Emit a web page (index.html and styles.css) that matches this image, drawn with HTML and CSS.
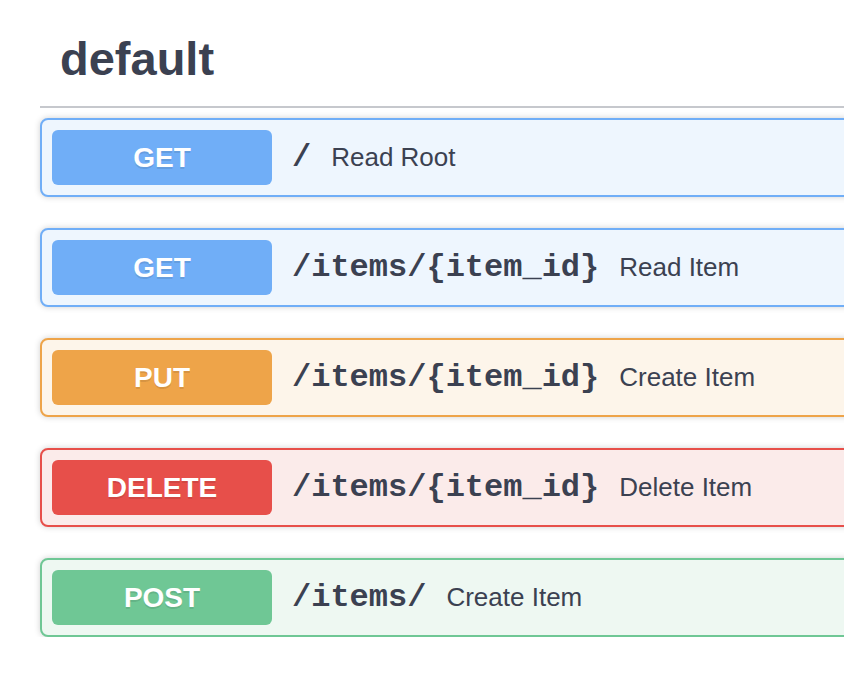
FILE: index.html
```html
<!DOCTYPE html>
<html lang="en">
<head>
<meta charset="utf-8">
<title>default</title>
<link rel="stylesheet" href="styles.css">
</head>
<body>
<div class="wrapper">
  <div class="tag">
    <h3 class="tag-title">default</h3>
  </div>
  <div class="ops">
    <div class="op op-get">
      <span class="method">GET</span>
      <span class="path">/</span>
      <span class="desc">Read Root</span>
    </div>
    <div class="op op-get">
      <span class="method">GET</span>
      <span class="path">/items/{item_id}</span>
      <span class="desc">Read Item</span>
    </div>
    <div class="op op-put">
      <span class="method">PUT</span>
      <span class="path">/items/{item_id}</span>
      <span class="desc">Create Item</span>
    </div>
    <div class="op op-delete">
      <span class="method">DELETE</span>
      <span class="path">/items/{item_id}</span>
      <span class="desc">Delete Item</span>
    </div>
    <div class="op op-post">
      <span class="method">POST</span>
      <span class="path">/items/</span>
      <span class="desc">Create Item</span>
    </div>
  </div>
</div>
</body>
</html>
```
FILE: styles.css
```css
html, body {
  margin: 0;
  padding: 0;
  background: #ffffff;
  overflow: hidden;
}
body {
  font-family: "Liberation Sans", Arial, sans-serif;
  color: #3b4151;
}
.wrapper {
  margin-left: 40px;
  width: 900px;
  padding-top: 11px;
}
.tag {
  padding: 20px 40px 20px 20px;
  border-bottom: 2px solid #c6c8cd;
}
.tag-title {
  margin: 0;
  font-size: 47px;
  font-weight: 700;
  line-height: 55px;
  color: #3b4151;
}
.ops {
  margin-top: 10px;
  display: flex;
  flex-direction: column;
  gap: 31px;
}
.op {
  display: flex;
  align-items: center;
  padding: 10px;
  border: 2px solid;
  border-radius: 8px;
  box-shadow: 0 0 6px rgba(0, 0, 0, 0.19);
}
.method {
  display: flex;
  align-items: center;
  justify-content: center;
  width: 220px;
  height: 55px;
  border-radius: 6px;
  color: #ffffff;
  font-size: 28px;
  font-weight: 700;
  text-shadow: 0 2px 0 rgba(0, 0, 0, 0.1);
  flex-shrink: 0;
}
.path {
  padding: 0 20px;
  font-family: "Liberation Mono", "Courier New", monospace;
  font-weight: 700;
  font-size: 32px;
  color: #3b4151;
}
.desc {
  font-size: 26px;
  color: #3b4151;
}
.op-get { background: #eef6fe; border-color: #70aef7; }
.op-get .method { background: #70aef7; }
.op-put { background: #fdf5ea; border-color: #eea449; }
.op-put .method { background: #eea449; }
.op-delete { background: #fbebea; border-color: #e74f4a; }
.op-delete .method { background: #e74f4a; }
.op-post { background: #eef8f2; border-color: #6fc795; }
.op-post .method { background: #6fc795; }
```
